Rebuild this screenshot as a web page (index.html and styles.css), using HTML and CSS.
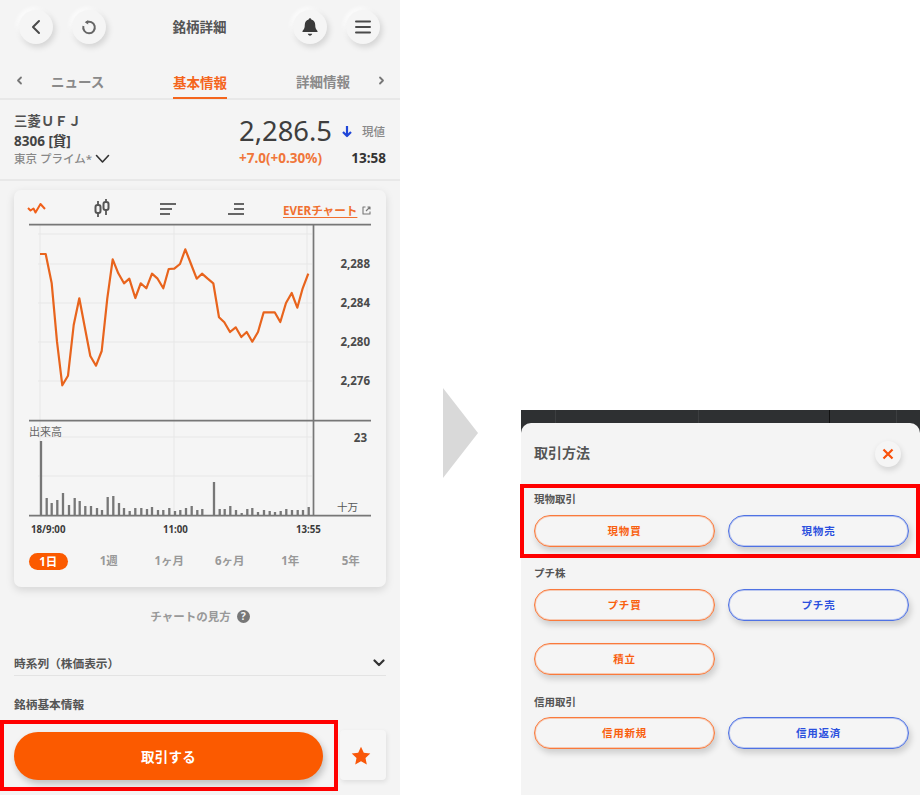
FILE: index.html
```html
<!DOCTYPE html>
<html lang="ja">
<head>
<meta charset="utf-8">
<title>銘柄詳細</title>
<link rel="stylesheet" href="styles.css">
</head>
<body>
<div class="stage">
  <section class="phone">
    <header class="topbar">
      <div class="group">
        <button class="round"><svg width="14" height="16" viewBox="0 0 14 16"><path class="ic" d="M10 2 4 8l6 6"/></svg></button>
        <button class="round"><svg width="16" height="16" viewBox="0 0 16 16"><path class="ic thin" d="M5.200 3.400A5.800 5.800 0 1 1 2.400 7"/><path class="fillic" d="M7.200 1v4.400L3.800 3.200z"/></svg></button>
      </div>
      <h1 class="title">銘柄詳細</h1>
      <div class="group">
        <button class="round"><svg width="18" height="20" viewBox="0 0 18 20"><path class="fillic dark" d="M9 1.200c.8 0 1.300.6 1.300 1.300 2.600.6 3.900 2.700 3.900 5.200 0 3.300.8 4.700 2.300 6.300v1H1.500v-1C3 12.400 3.800 11 3.800 7.700c0-2.500 1.300-4.600 3.900-5.200 0-.7.500-1.300 1.300-1.300zM6.800 16.800h4.400c-.2 1.100-1.100 1.900-2.200 1.900s-2-.8-2.200-1.900z"/></svg></button>
        <button class="round"><svg width="16" height="14" viewBox="0 0 16 14"><path class="ic" d="M1 1.500h14M1 7h14M1 12.500h14"/></svg></button>
      </div>
    </header>

    <nav class="tabs">
      <svg class="tab-arrow" width="7" height="9" viewBox="0 0 7 9"><path class="ic grey" d="M5 1.500 2 4.500l3 3"/></svg>
      <span class="tab">ニュース</span>
      <span class="tab active">基本情報</span>
      <span class="tab">詳細情報</span>
      <svg class="tab-arrow end" width="7" height="9" viewBox="0 0 7 9"><path class="ic grey" d="M2 1.500l3 3-3 3"/></svg>
    </nav>

    <section class="stock">
      <div class="names">
        <div class="name">三菱ＵＦＪ</div>
        <div class="code">8306 [貸]</div>
        <div class="market">東京 プライム*<svg width="15" height="10" viewBox="0 0 15 10"><path class="ic dark" d="M1.500 1.500 7.500 8l6-6.500"/></svg></div>
      </div>
      <div class="quote">
        <div class="quote-top">
          <span class="price">2,286.5</span>
          <svg width="12" height="13" viewBox="0 0 12 13"><path class="ic blue" d="M6 1v10M2 7l4 4 4-4"/></svg>
          <span class="now">現値</span>
        </div>
        <div class="quote-bottom">
          <span class="change">+7.0(+0.30%)</span>
          <span class="time">13:58</span>
        </div>
      </div>
    </section>

    <section class="card">
      <div class="toolbar">
        <svg width="20" height="12" viewBox="0 0 20 12"><path class="ic orange" d="M1 5l2.500 2.500L6.500 5.500 8.500 9.500 13.500 1l4.500 5"/></svg>
        <svg width="16" height="22" viewBox="0 0 16 22"><path class="ic thin" d="M4 3v16M12 1v16"/><rect class="candle" x="1.500" y="7" width="5" height="8" rx="2"/><rect class="candle" x="9.500" y="4" width="5" height="8" rx="2"/></svg>
        <svg width="16" height="14" viewBox="0 0 16 14"><path class="ic thin" d="M0 2h16M0 7h12M0 12h10"/></svg>
        <svg width="16" height="14" viewBox="0 0 16 14"><path class="ic thin" d="M6 2h10M6 7h10M0 12h16"/></svg>
        <div class="ever"><a class="ever-link">EVERチャート</a><svg class="ext" width="9" height="9" viewBox="0 0 9 9"><path class="ic thin hair" d="M3.500 1H1v7h7V5.500M4 5l4-4M5.500 1H8v2.500"/></svg></div>
      </div>

      <svg class="chart" width="372" height="317" viewBox="14 223 372 317">
        <path class="grid" d="M40 225V516M174 225V516M307 225V516M38 234H312M38 264H312M38 303H312M38 342H312M38 381H312M38 437H312M38 476H312"/>
        <polyline class="price-line" points="40,254 45.700,254 51.700,283.300 57,341.700 62.300,385.300 68,375.700 73.700,325 79.300,298.300 84.700,326.700 90.300,356 96,365.700 101.700,351 107.300,298.300 112.700,259.300 118.300,273.300 124,283.300 129.300,278.700 135.300,298 140.700,283.300 146.300,288.300 152,273.700 157.300,278.300 163.300,288.300 168.700,269 174.300,268.700 180,264 185.300,249.300 191,264 196.700,278.700 202,273.700 207.700,278.700 213.300,283.300 219,317.300 224.300,322.300 230,332 235.700,327.300 241.300,337 246.700,332 252.300,341.700 258,332 263.700,312.300 269.300,312.300 274.700,312.300 280.300,322 286,303 291.700,293 297.300,307.700 302.700,288.300 308.300,273.700"/>
        <path class="bars" d="M41 441V516M46.700 498V516M51.700 503V516M57.300 500V516M63 493V516M69 505V516M74.700 498V516M79.700 501V516M85.300 506V516M91 506V516M97 508V516M102 510V516M107.700 497V516M113.300 496V516M119 503V516M124 508V516M129.700 511V516M135.300 508V516M141.300 508V516M147 509V516M152 507V516M158 510V516M163.300 510V516M169.300 508V516M175 511V516M180.300 510V516M186 508V516M191.700 506V516M197.300 510V516M202.300 509V516M214 482V516M219.700 509V516M224.700 509V516M230.300 506V516M236 510V516M241.700 513V516M247.300 509V516M252.300 508V516M258 512V516M264 510V516M269.700 511V516M275 512V516M280.700 511V516M286.300 509V516M292 510V516M297.700 510V516M303 510V516M308.700 507V516"/>
        <path class="axis" d="M29 224.700H371M29 420.700H371M29 515.700H371M313.500 224V516"/>
        <text class="val" x="370" y="268" text-anchor="end">2,288</text>
        <text class="val" x="370" y="307" text-anchor="end">2,284</text>
        <text class="val" x="370" y="346" text-anchor="end">2,280</text>
        <text class="val" x="370" y="385" text-anchor="end">2,276</text>
        <text class="val" x="367" y="442" text-anchor="end">23</text>
        <text class="unit" x="337" y="511">十万</text>
        <text class="vol" x="29" y="436">出来高</text>
        <text class="stamp" x="31" y="533">18/9:00</text>
        <text class="stamp" x="163" y="533">11:00</text>
        <text class="stamp" x="296" y="533">13:55</text>
      </svg>

      <div class="periods">
        <span class="period on">1日</span>
        <span class="period">1週</span>
        <span class="period">1ヶ月</span>
        <span class="period">6ヶ月</span>
        <span class="period">1年</span>
        <span class="period">5年</span>
      </div>
    </section>

    <div class="howto">チャートの見方<span class="help">?</span></div>

    <div class="series">
      <span>時系列（株価表示）</span>
      <svg width="12" height="8" viewBox="0 0 12 8"><path class="ic dark bold" d="M1.500 1.500 6 6l4.500-4.500"/></svg>
    </div>

    <h2 class="basic">銘柄基本情報</h2>

    <footer class="footer">
      <div class="trade-box"><button class="trade">取引する</button></div>
      <button class="star"><svg width="20" height="19" viewBox="0 0 20 19"><path class="fillic orange-fill" d="M10 .8l2.800 6 6.500.8-4.800 4.500 1.300 6.400L10 15.300l-5.800 3.200 1.300-6.400L.7 7.600l6.500-.8z"/></svg></button>
    </footer>
  </section>

  <div class="next-arrow"></div>

  <section class="modal">
    <svg class="backdrop" width="400" height="13" viewBox="0 0 400 13"><path class="backdrop-line" d="M35.500 0V13M178.500 0V13M376.500 0V13"/><path class="backdrop-strong" d="M309.500 0V13"/></svg>
    <div class="sheet">
      <div class="sheet-head">
        <h2 class="sheet-title">取引方法</h2>
        <button class="close"><svg width="12" height="12" viewBox="0 0 12 12"><path class="ic orange thick" d="M1.500 1.500l9 9M10.500 1.500l-9 9"/></svg></button>
      </div>
      <div class="group-box highlighted">
        <div class="label">現物取引</div>
        <div class="btn-grid">
          <button class="act buy">現物買</button>
          <button class="act sell">現物売</button>
        </div>
      </div>
      <div class="group-box">
        <div class="label">プチ株</div>
        <div class="btn-grid">
          <button class="act buy">プチ買</button>
          <button class="act sell">プチ売</button>
          <button class="act buy">積立</button>
        </div>
      </div>
      <div class="group-box credit">
        <div class="label">信用取引</div>
        <div class="btn-grid">
          <button class="act buy">信用新規</button>
          <button class="act sell">信用返済</button>
        </div>
      </div>
    </div>
  </section>
</div>
</body>
</html>
```

FILE: styles.css
```css
* { box-sizing: border-box; }
html, body { margin: 0; background: #fff; }
body {
  font-family: "Noto Sans", "Noto Sans CJK JP", sans-serif;
  color: #444;
  overflow: hidden;
}
button { font: inherit; padding: 0; cursor: pointer; }
h1, h2 { margin: 0; }
svg { display: block; flex: none; }

.ic { fill: none; stroke: #4a4a4a; stroke-width: 2; stroke-linecap: round; stroke-linejoin: round; }
.ic.thin { stroke-width: 2; stroke: #666; stroke-linecap: butt; }
.ic.hair { stroke-width: 1.100; stroke: #777; }
.ic.grey { stroke: #777; stroke-width: 1.800; }
.ic.dark { stroke: #333; stroke-width: 1.600; }
.ic.bold { stroke-width: 2.200; }
.ic.blue { stroke: #1f46d8; stroke-width: 2.200; stroke-linecap: butt; }
.ic.orange { stroke: #f0601a; stroke-width: 2; stroke-linecap: butt; }
.ic.thick { stroke: #f9500a; stroke-width: 2.200; }
.fillic { fill: #666; }
.fillic.dark { fill: #3a3a3a; }
.fillic.orange-fill { fill: #f9580a; }
.candle { fill: #f4f4f4; stroke: #555; stroke-width: 2; }

.stage { display: flex; width: 920px; height: 795px; }

/* Left phone */
.phone { flex: none; width: 400px; height: 795px; background: #f4f4f4; display: flex; flex-direction: column; }

.topbar { height: 54px; padding: 0 20px 0 19px; display: flex; align-items: center; justify-content: space-between; }
.group { display: flex; gap: 19px; }
.round {
  width: 34px; height: 34px; border: 0; border-radius: 50%; background: #f5f5f5;
  display: flex; align-items: center; justify-content: center;
  box-shadow: 2px 3px 6px rgba(0,0,0,.14), -2px -2px 4px rgba(255,255,255,.9);
}
.title { font-size: 13.500px; font-weight: 700; color: #555; margin-top: -2px; }

.tabs {
  height: 46px; border-bottom: 2px solid #e8e8e8;
  display: grid; grid-template-columns: 51px 122px 123px 74px 30px; align-items: end;
}
.tab-arrow { align-self: center; margin: 8px 0 0 16px; }
.tab-arrow.end { margin-left: 8px; }
.tab { font-size: 13.500px; font-weight: 700; color: #8a8a8a; height: 30px; line-height: 29px; justify-self: start; }
.tab.active { color: #f4651c; box-shadow: inset 0 -2px 0 #f4651c; margin-bottom: -0.500px; }

.stock { height: 81px; border-bottom: 2px solid #e8e8e8; padding: 11px 14px 0; display: flex; justify-content: space-between; }
.name { font-size: 13.300px; font-weight: 700; line-height: 20px; color: #505050; letter-spacing: .2px; }
.code { font-size: 13.500px; font-weight: 700; line-height: 20px; color: #444; }
.market { font-size: 11.500px; font-weight: 500; line-height: 16px; color: #888; display: flex; align-items: center; }
.market svg { margin-left: 3px; }
.quote { width: 147px; margin-top: -1px; }
.quote-top { display: flex; align-items: center; height: 42px; }
.price { font-size: 27.400px; line-height: 42px; color: #3e3e3e; width: 102px; }
.now { font-size: 11.500px; color: #888; margin-left: 9px; font-weight: 500; }
.quote-bottom { display: flex; justify-content: space-between; align-items: center; height: 16px; margin-top: -2px; }
.change { font-size: 13.500px; font-weight: 700; color: #f0763a; }
.time { font-size: 13.500px; font-weight: 700; color: #333; }

.card {
  margin: 9px 14px 0; width: 372px; height: 397px; background: #f5f5f5; border-radius: 7px;
  box-shadow: 0 3px 9px rgba(0,0,0,.13);
}
.toolbar { height: 33px; display: grid; grid-template-columns: 46px 84px 48px 88px 1fr; align-items: center; justify-items: center; padding-top: 4px; }
.ever { display: flex; justify-self: start; padding-left: 3px; gap: 5px; align-items: flex-start; margin-top: 2px; }
.ever-link { font-size: 11.600px; font-weight: 700; color: #f07030; text-decoration: underline; text-underline-offset: 2px; white-space: nowrap; }
.ext { margin-top: 4px; }

.grid { fill: none; stroke: #e7e7e7; stroke-width: 1; }
.axis { fill: none; stroke: #777; stroke-width: 1.700; }
.price-line { fill: none; stroke: #e8641d; stroke-width: 2.200; stroke-linejoin: round; }
.bars { fill: none; stroke: #777; stroke-width: 2.300; }
.val { font-size: 11.500px; font-weight: 700; fill: #4a4a4a; }
.unit { font-size: 10.500px; fill: #555; }
.vol { font-size: 11px; fill: #666; }
.stamp { font-size: 9.700px; font-weight: 700; fill: #3a3a3a; }

.periods { display: grid; grid-template-columns: repeat(6, 60.500px); padding-left: 4px; margin-top: 10px; align-items: center; justify-items: center; }
.period { font-size: 11.500px; font-weight: 700; color: #999; line-height: 22px; }
.period.on { width: 39px; height: 17px; line-height: 17px; border-radius: 9px; background: #fb5a00; color: #fff; text-align: center; }

.howto { margin-top: 19px; height: 20px; display: flex; align-items: center; justify-content: center; gap: 6px; font-size: 11.500px; font-weight: 600; color: #999; }
.help { width: 13px; height: 13px; border-radius: 50%; background: #777; color: #f4f4f4; font-size: 10.500px; line-height: 13px; text-align: center; font-weight: 700; }

.series { margin: 24px 14px 0; height: 26px; border-bottom: 1.500px solid #e3e3e3; display: flex; align-items: center; justify-content: space-between; padding: 0 1px 0 0; font-size: 11.700px; font-weight: 700; color: #555; }
.basic { margin: 18px 14px 0; height: 20px; line-height: 20px; font-size: 11.700px; font-weight: 700; color: #555; }

.footer { margin-top: 6px; height: 75px; display: flex; align-items: flex-start; }
.trade-box { width: 338px; height: 71px; border: 4px solid #f00; padding: 8px 11px 7px 10px; }
.trade {
  width: 100%; height: 48px; border: 0; border-radius: 24px; background: #fb5a00; color: #fff;
  font-size: 13.500px; font-weight: 700; letter-spacing: .3px;
  box-shadow: 2px 4px 7px rgba(0,0,0,.22);
}
.star {
  margin: 10px 0 0 2px; width: 46px; height: 50px; border: 0; border-radius: 4px; background: #f6f6f6; padding-right: 4px;
  display: flex; align-items: center; justify-content: center;
  box-shadow: 1px 2px 5px rgba(0,0,0,.09);
}

/* Transition arrow */
.next-arrow { flex: none; width: 35px; height: 90px; margin: 388px 0 0 43px; background: #d9d9d9; clip-path: polygon(0 0, 100% 50%, 0 100%); }

/* Right sheet */
.modal {
  flex: none; width: 400px; height: 385px; margin: 410px 0 0 42px;
  background: linear-gradient(#2e3032, #2e3032) 1px 0 / 100% 24px no-repeat;
  display: flex; flex-direction: column;
}
.backdrop { flex: none; }
.backdrop-line { stroke: #3c3e40; stroke-width: 1; fill: none; }
.backdrop-strong { stroke: #111; stroke-width: 1; fill: none; }
.sheet { flex: 1; margin-left: 1px; background: #f4f4f4; border-radius: 10px 10px 0 0; }
.sheet-head { height: 61px; padding: 0 19px 0 13px; display: flex; align-items: center; justify-content: space-between; }
.sheet-title { font-size: 14px; font-weight: 700; color: #555; margin-top: -3px; }
.close {
  width: 26px; height: 26px; margin-top: 1px; border: 0; border-radius: 50%; background: #f5f5f5;
  display: flex; align-items: center; justify-content: center;
  box-shadow: 1px 3px 6px rgba(0,0,0,.14);
}
.group-box { padding: 5px 11px 0 13px; }
.group-box.highlighted { margin-left: -1px; height: 74px; border: 4px solid #f00; padding: 1px 7px 0 10px; }
.group-box.credit { padding-top: 17px; }
.label { height: 20px; line-height: 20px; font-size: 10.500px; font-weight: 700; color: #555; margin-bottom: 6px; }
.credit .label { margin-bottom: 5px; }
.btn-grid { display: grid; grid-template-columns: 181px 181px; column-gap: 13px; row-gap: 22px; }
.act {
  height: 32px; border-radius: 16px; background: #f5f5f5; font-size: 10.500px; font-weight: 700; letter-spacing: .8px;
  line-height: 28px;
}
.buy { border: 1px solid #fa7a3c; color: #f9600f; box-shadow: inset 0 0 0 1px rgba(250,122,60,.35), 2px 4px 6px rgba(0,0,0,.16); }
.sell { border: 1px solid #4f72e4; color: #2b50de; box-shadow: inset 0 0 0 1px rgba(79,114,228,.35), 2px 4px 6px rgba(0,0,0,.16); }
```
